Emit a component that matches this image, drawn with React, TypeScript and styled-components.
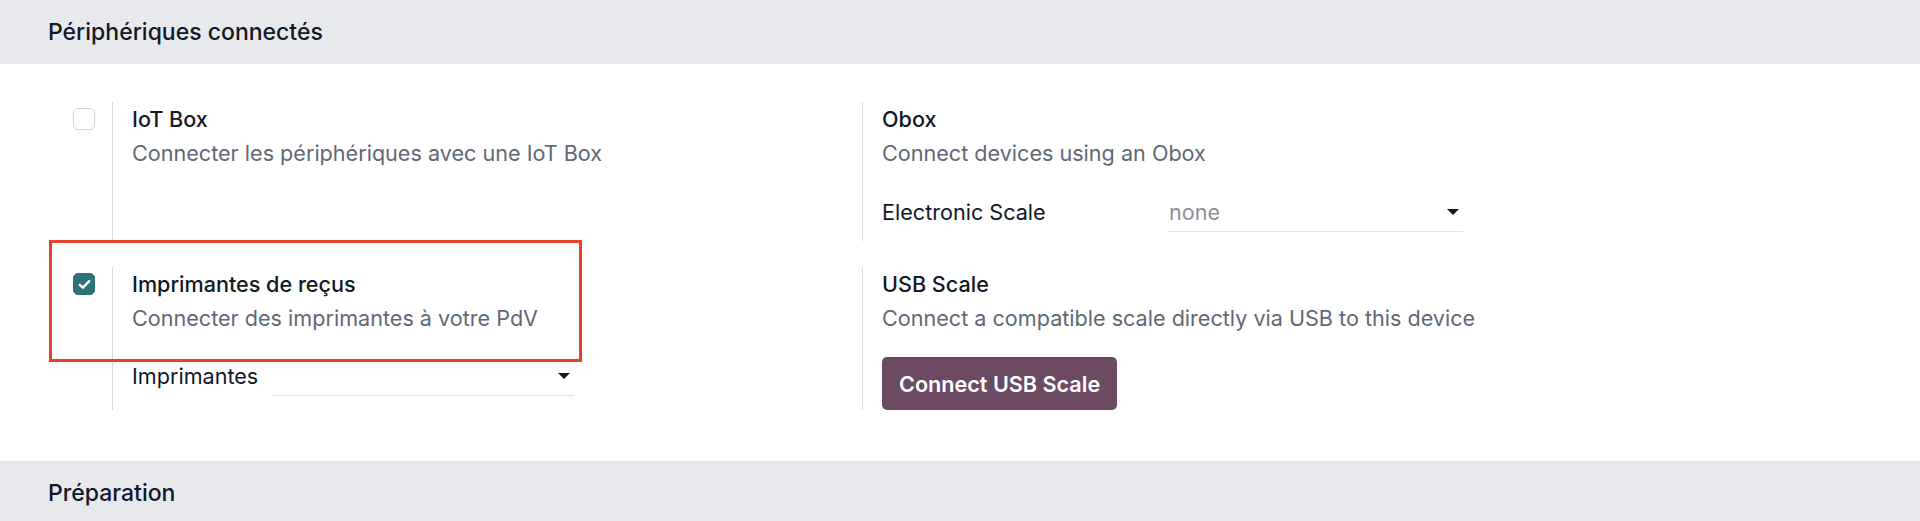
import React from "react";
import styled, { createGlobalStyle } from "styled-components";

const Global = createGlobalStyle`
  html, body { margin: 0; padding: 0; background: #ffffff; }
  body { font-family: Inter, "Noto Sans", sans-serif; color: #111827; }
  * { box-sizing: border-box; }
`;

const Page = styled.div`
  width: 1920px;
  height: 521px;
  overflow: hidden;
  background: #fff;
`;

const SectionHeader = styled.div<{ $top?: number }>`
  height: 64px;
  display: flex;
  align-items: center;
  padding-left: 48px;
  margin-top: ${(p) => p.$top ?? 0}px;
  background: #e7e9ed;
  font-size: 23px;
  font-weight: 500;
  color: #111827;
`;

const Grid = styled.div`
  display: grid;
  grid-template-columns: 750px 750px;
  row-gap: 26px;
  padding: 38px 0 0 49px;
`;

const SettingBox = styled.div`
  position: relative;
  display: flex;
  align-items: stretch;
`;

const LeftPane = styled.div`
  width: 63px;
  flex: none;
  display: flex;
  justify-content: flex-start;
  padding: 6px 0 0 24px;
`;

const Checkbox = styled.span<{ $checked?: boolean }>`
  width: 22px;
  height: 22px;
  border-radius: 5px;
  display: flex;
  align-items: center;
  justify-content: center;
  border: 1px solid ${(p) => (p.$checked ? "#2d7276" : "#d3d6dc")};
  background: ${(p) => (p.$checked ? "#2d7276" : "#fff")};
`;

const RightPane = styled.div`
  border-left: 1px solid #d8dadd;
  padding-left: 19px;
  display: flex;
  flex-direction: column;
`;

const Title = styled.div`
  font-size: 21.6px;
  line-height: 34px;
  font-weight: 500;
  color: #111827;
`;

const Desc = styled.div`
  font-size: 21.6px;
  line-height: 34px;
  color: #5f6876;
`;

const FieldRow = styled.div<{ $labelWidth: number; $top: number; $bottom: number }>`
  display: grid;
  grid-template-columns: ${(p) => p.$labelWidth}px auto;
  align-items: center;
  margin-top: ${(p) => p.$top}px;
  margin-bottom: ${(p) => p.$bottom}px;
  height: 40px;
`;

const FieldLabel = styled.div`
  font-size: 21.6px;
  color: #111827;
`;

const Select = styled.div<{ $width: number }>`
  width: ${(p) => p.$width}px;
  height: 40px;
  display: flex;
  align-items: center;
  justify-content: space-between;
  border-bottom: 1px solid #dfe1e5;
  padding: 0 4px 0 1px;
  font-size: 21.6px;
  color: #8a8f98;
`;

const Caret = styled.span`
  width: 0;
  height: 0;
  border-left: 6px solid transparent;
  border-right: 6px solid transparent;
  border-top: 6px solid #111827;
`;

const Button = styled.button`
  align-self: flex-start;
  margin-top: 22px;
  height: 53px;
  padding: 0 17px;
  border: none;
  border-radius: 5px;
  background: #6c4a64;
  color: #fff;
  font-family: inherit;
  font-size: 21.6px;
  font-weight: 600;
`;

const Highlight = styled.div`
  position: absolute;
  left: 0;
  top: -27px;
  width: 533px;
  height: 122px;
  border: 3.5px solid #e6412b;
  pointer-events: none;
`;

const Check = () => (
  <svg width="13" height="11" viewBox="0 0 13 11">
    <path d="M1.8 5.8 L4.9 8.7 L11.2 2.2" fill="none" stroke="#fff" strokeWidth="2.4" strokeLinecap="round" strokeLinejoin="round" />
  </svg>
);

export default function App() {
  return (
    <Page>
      <Global />
      <SectionHeader>Périphériques connectés</SectionHeader>
      <Grid>
        <SettingBox>
          <LeftPane>
            <Checkbox />
          </LeftPane>
          <RightPane>
            <Title>IoT Box</Title>
            <Desc>Connecter les périphériques avec une IoT Box</Desc>
          </RightPane>
        </SettingBox>
        <SettingBox>
          <LeftPane />
          <RightPane>
            <Title>Obox</Title>
            <Desc>Connect devices using an Obox</Desc>
            <FieldRow $labelWidth={286} $top={22} $bottom={9}>
              <FieldLabel>Electronic Scale</FieldLabel>
              <Select $width={295}>
                <span>none</span>
                <Caret />
              </Select>
            </FieldRow>
          </RightPane>
        </SettingBox>
        <SettingBox>
          <Highlight />
          <LeftPane>
            <Checkbox $checked>
              <Check />
            </Checkbox>
          </LeftPane>
          <RightPane>
            <Title>Imprimantes de reçus</Title>
            <Desc>Connecter des imprimantes à votre PdV</Desc>
            <FieldRow $labelWidth={140} $top={21} $bottom={0}>
              <FieldLabel>Imprimantes</FieldLabel>
              <Select $width={302}>
                <span />
                <Caret />
              </Select>
            </FieldRow>
          </RightPane>
        </SettingBox>
        <SettingBox>
          <LeftPane />
          <RightPane>
            <Title>USB Scale</Title>
            <Desc>Connect a compatible scale directly via USB to this device</Desc>
            <Button>Connect USB Scale</Button>
          </RightPane>
        </SettingBox>
      </Grid>
      <SectionHeader $top={51}>Préparation</SectionHeader>
    </Page>
  );
}
